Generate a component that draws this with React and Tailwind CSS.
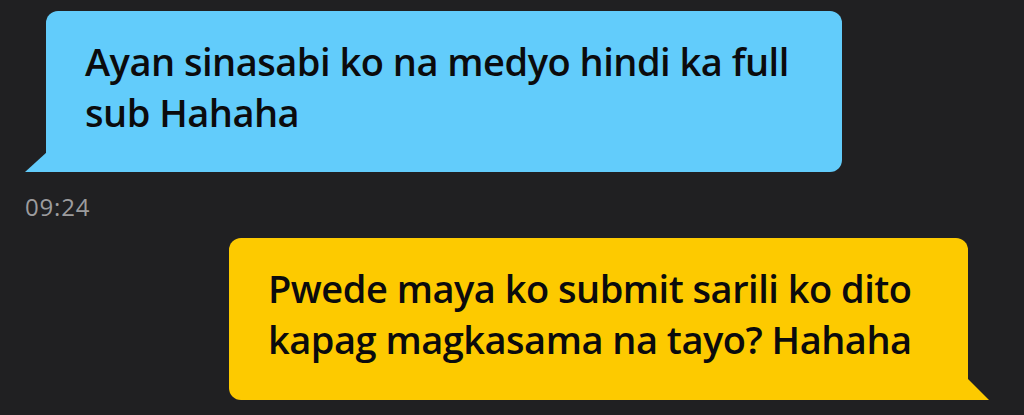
import React from 'react';

const MESSAGES = [
  {
    id: 'm1',
    side: 'left',
    lines: ['Ayan sinasabi ko na medyo hindi ka full', 'sub Hahaha'],
  },
  {
    id: 'm2',
    side: 'right',
    lines: ['Pwede maya ko submit sarili ko dito', 'kapag magkasama na tayo? Hahaha'],
  },
];

function Bubble({ msg }) {
  const isLeft = msg.side === 'left';
  return (
    <div
      className={
        isLeft
          ? 'relative w-[796px] h-[161px] ml-[46px] bg-[#62ccfb] rounded-[12px] rounded-bl-none pl-[39px] pt-[25px]'
          : 'relative w-[739px] h-[162px] ml-[229px] bg-[#fdca00] rounded-[12px] rounded-br-none pl-[39px] pt-[25px]'
      }
    >
      {/* bubble tail */}
      {isLeft ? (
        <svg className="absolute left-[-21px] bottom-0" width="22" height="20" viewBox="0 0 22 20">
          <polygon points="22,0 22,20 0,20" fill="#62ccfb" />
        </svg>
      ) : (
        <svg className="absolute right-[-21px] bottom-0" width="22" height="22" viewBox="0 0 22 22">
          <polygon points="0,0 0,22 22,22" fill="#fdca00" />
        </svg>
      )}
      <p className="font-['Open_Sans',sans-serif] font-semibold text-[38px] leading-[51px] text-[#0b0b0d] tracking-[-0.5px]">
        {msg.lines.map((l) => (
          <span key={l} className="block whitespace-nowrap">{l}</span>
        ))}
      </p>
    </div>
  );
}

export default function App() {
  return (
    <div className="w-[1024px] h-[415px] bg-[#202022] overflow-hidden pt-[11px]">
      <Bubble msg={MESSAGES[0]} />
      <div className="ml-[25px] mt-[21px] font-['Open_Sans',sans-serif] text-[24px] leading-[28px] tracking-[0.8px] text-[#9c9c9e]">
        09:24
      </div>
      <div className="mt-[17px]">
        <Bubble msg={MESSAGES[1]} />
      </div>
    </div>
  );
}
